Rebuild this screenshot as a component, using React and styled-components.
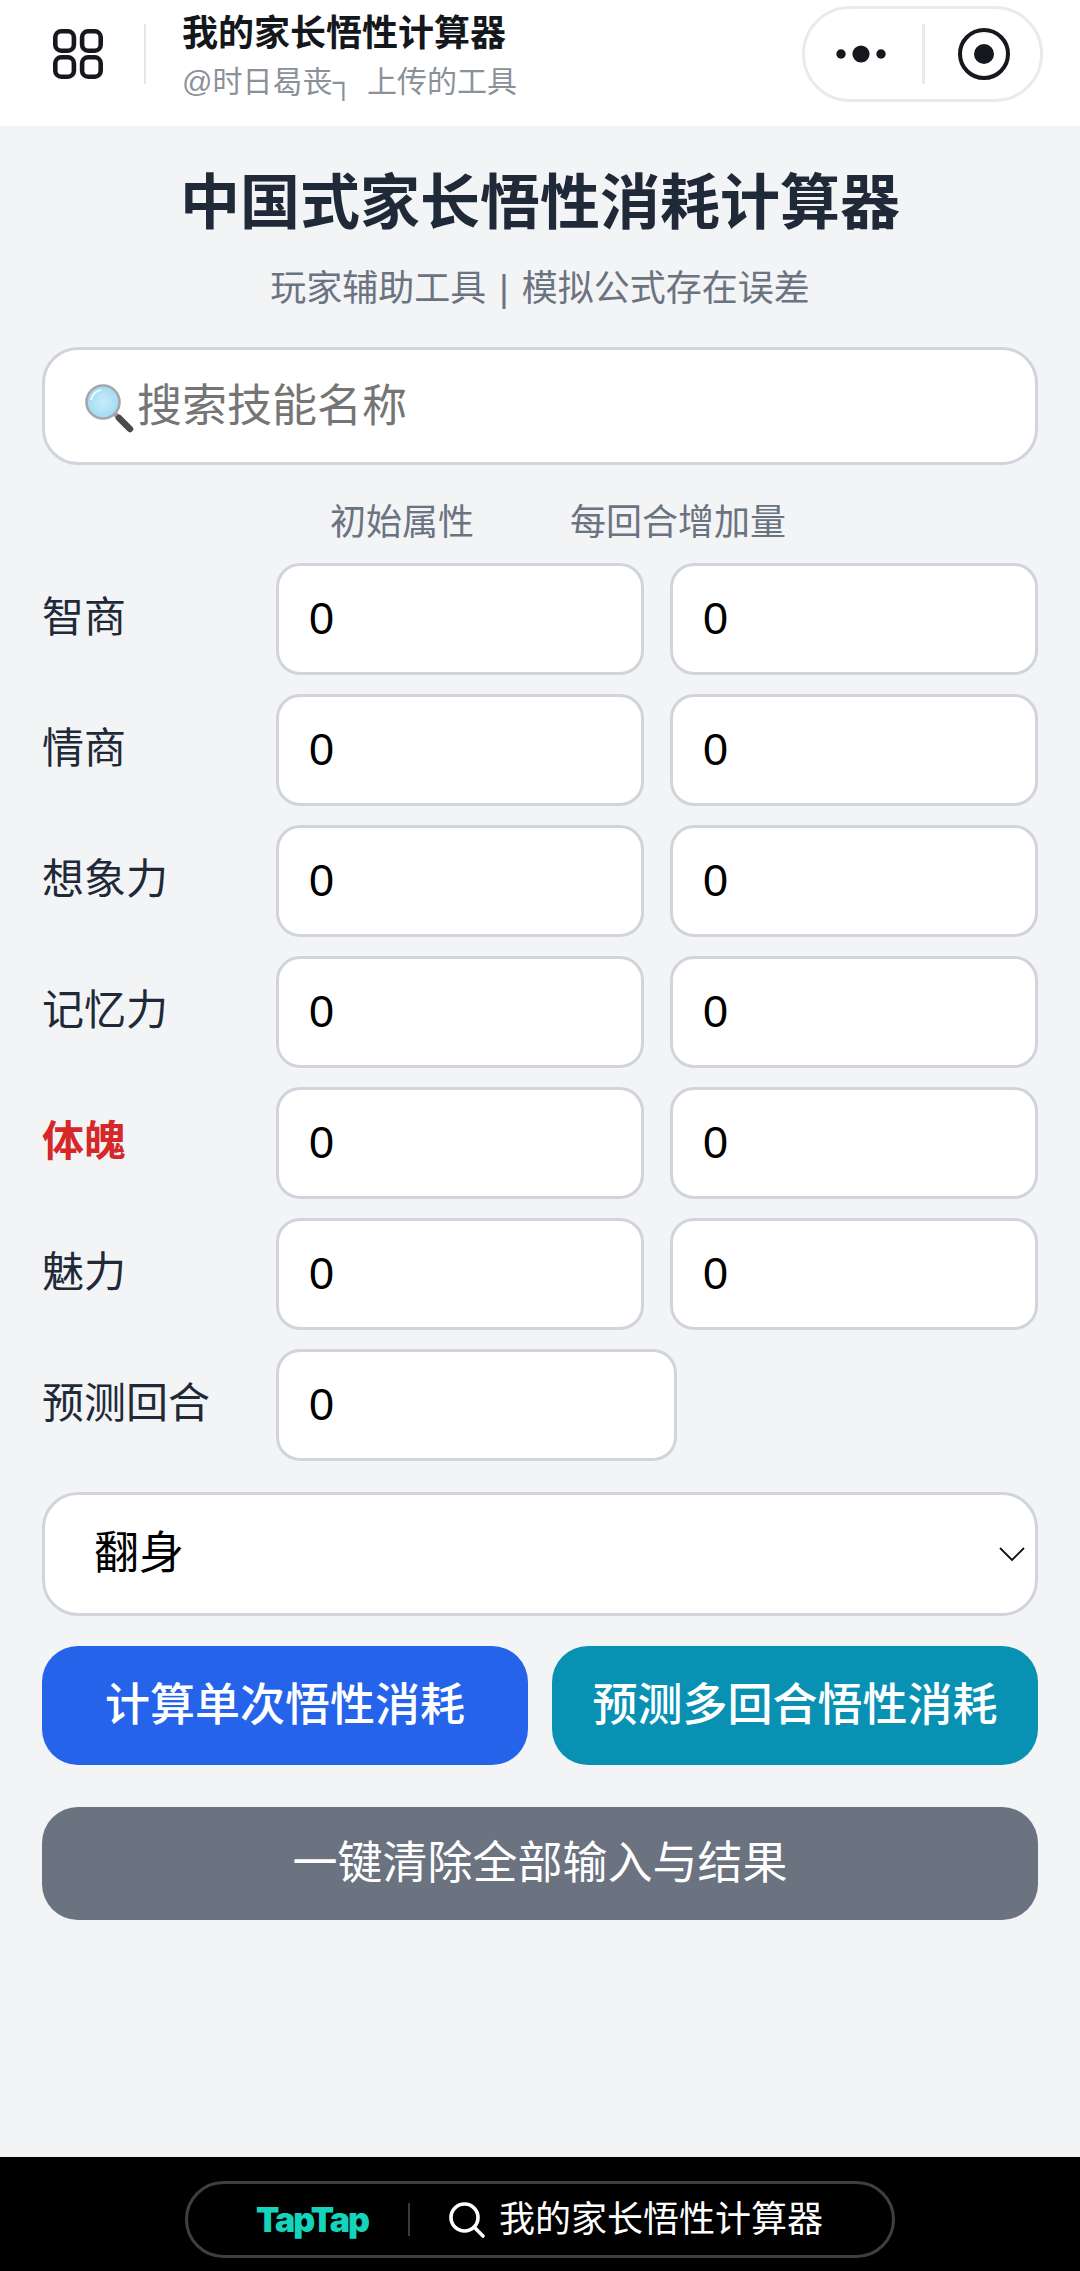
import React from "react";
import styled, { createGlobalStyle } from "styled-components";

const CJK = `"Liberation Sans", "Noto Sans CJK SC", sans-serif`;

const Global = createGlobalStyle`
  html, body { margin: 0; padding: 0; background: #f3f4f6; }
  * { box-sizing: border-box; }
  body { font-family: ${CJK}; }
`;

const Page = styled.div`
  width: 1080px;
  height: 2271px;
  display: flex;
  flex-direction: column;
  background: #f3f4f6;
  overflow: hidden;
`;

const TopBar = styled.header`
  height: 126px;
  flex: none;
  background: #fff;
  display: flex;
  align-items: flex-start;
  position: relative;
`;

const GridButton = styled.div`
  width: 144px;
  height: 108px;
  display: flex;
  align-items: center;
  justify-content: center;
  padding-left: 12px;
`;

const VLine = styled.div`
  width: 2px;
  height: 60px;
  margin-top: 24px;
  background: #e5e7eb;
  flex: none;
`;

const TitleBlock = styled.div`
  margin-left: 36px;
  padding-top: 9px;
  display: flex;
  flex-direction: column;
  gap: 2px;
`;

const AppName = styled.div`
  font-size: 36px;
  line-height: 50px;
  font-weight: 700;
  color: #14171c;
`;

const AppSub = styled.div`
  font-size: 30px;
  line-height: 42px;
  color: #8b9199;
  word-spacing: 5px;
`;

const Capsule = styled.div`
  position: absolute;
  left: 802px;
  top: 6px;
  width: 241px;
  height: 96px;
  border: 3px solid #e8eaed;
  border-radius: 48px;
  display: flex;
  align-items: flex-start;
`;

const CapsuleSlot = styled.div`
  width: ${(p) => p.$w}px;
  height: 90px;
  padding: 0 ${(p) => p.$right || 0}px 0 ${(p) => p.$left || 0}px;
  display: flex;
  align-items: center;
  justify-content: center;
`;

const CapsuleLine = styled.div`
  width: 3px;
  height: 60px;
  margin-top: 15px;
  background: #e8eaed;
  flex: none;
`;

const Main = styled.main`
  flex: 1;
  padding: 0 42px;
  display: flex;
  flex-direction: column;
`;

const Title = styled.h1`
  margin: 45px 0 0;
  font-size: 60px;
  line-height: 66px;
  font-weight: 700;
  color: #1f2937;
  text-align: center;
`;

const Subtitle = styled.p`
  margin: 26px 0 0;
  font-size: 36px;
  line-height: 52px;
  color: #6b7280;
  text-align: center;
  word-spacing: 3px;
`;

const SearchWrap = styled.div`
  position: relative;
  margin-top: 32px;
`;

const SearchIcon = styled.svg`
  position: absolute;
  left: 40px;
  top: 34px;
  width: 54px;
  height: 54px;
`;

const baseField = `
  border: 3px solid #d1d5db;
  background: #fff;
  outline: none;
  font-family: ${CJK};
  font-size: 45px;
  color: #000;
  display: block;
`;

const SearchInput = styled.input`
  ${baseField}
  width: 100%;
  height: 118px;
  border-radius: 36px;
  padding: 2px 0 0 92px;
  &::placeholder { color: #757575; opacity: 1; }
`;

const ColumnHead = styled.div`
  display: flex;
  gap: 96px;
  padding-left: 288px;
  margin-top: 36px;
  font-size: 36px;
  line-height: 44px;
  color: #6b7280;
`;

const Rows = styled.div`
  margin-top: 18px;
  display: flex;
  flex-direction: column;
  gap: 19px;
`;

const Row = styled.div`
  display: flex;
  align-items: center;
  gap: 26px;
`;

const Label = styled.label`
  width: 208px;
  flex: none;
  font-size: 42px;
  line-height: 56px;
  padding-bottom: 2px;
  color: ${(p) => (p.$alert ? "#d62828" : "#1f2937")};
  font-weight: ${(p) => (p.$alert ? 700 : 400)};
`;

const NumberField = styled.input`
  ${baseField}
  width: ${(p) => p.$w || 368}px;
  height: 112px;
  border-radius: 24px;
  padding: 0 0 0 30px;
`;

const SelectWrap = styled.div`
  position: relative;
  margin-top: 31px;
`;

const SkillSelect = styled.select`
  ${baseField}
  width: 100%;
  height: 124px;
  border-radius: 36px;
  padding: 0 0 2px 49px;
  appearance: none;
  -webkit-appearance: none;
`;

const Chevron = styled.svg`
  position: absolute;
  right: 13px;
  top: 54px;
  width: 26px;
  height: 16px;
`;

const ButtonRow = styled.div`
  display: flex;
  gap: 24px;
  margin-top: 30px;
`;

const Action = styled.button`
  flex: 1;
  height: ${(p) => p.$h}px;
  border: 0;
  border-radius: 36px;
  background: ${(p) => p.$bg};
  color: #fff;
  font-family: ${CJK};
  font-size: 45px;
  font-weight: ${(p) => p.$weight || 500};
  padding: 0 0 8px;
  display: block;
  width: 100%;
`;

const ClearWrap = styled.div`
  margin-top: 42px;
`;

const Footer = styled.footer`
  height: 114px;
  flex: none;
  background: #000;
  padding: 24px 0 0 185px;
`;

const FooterPill = styled.div`
  width: 710px;
  height: 77px;
  border: 3px solid #3f3f3f;
  border-radius: 39px;
  display: flex;
  align-items: center;
  padding-left: 68px;
`;

const TapLogo = styled.span`
  width: 114px;
  flex: none;
  font-family: Inter, sans-serif;
  font-weight: 900;
  font-size: 34px;
  letter-spacing: -1.9px;
  line-height: 36px;
  color: #14d4bb;
  white-space: nowrap;
`;

const FooterLine = styled.div`
  width: 2px;
  height: 33px;
  margin-left: 38px;
  background: #3a3a3a;
  flex: none;
`;

const FooterSearch = styled.svg`
  width: 38px;
  height: 38px;
  margin-left: 38px;
  flex: none;
`;

const FooterText = styled.span`
  margin-left: 13px;
  font-size: 36px;
  line-height: 50px;
  color: #fff;
  white-space: nowrap;
`;

const stats = [
  { name: "智商" },
  { name: "情商" },
  { name: "想象力" },
  { name: "记忆力" },
  { name: "体魄", alert: true },
  { name: "魅力" },
];

export default function App() {
  return (
    <Page>
      <Global />
      <TopBar>
        <GridButton>
          <svg width="50" height="50" viewBox="0 0 50 50" fill="none" stroke="#16181d" strokeWidth="4.6">
            <rect x="2.3" y="2.3" width="18.6" height="19.4" rx="6" />
            <rect x="29.1" y="2.3" width="18.6" height="19.4" rx="6" />
            <rect x="2.3" y="28.3" width="18.6" height="19.4" rx="6" />
            <rect x="29.1" y="28.3" width="18.6" height="19.4" rx="6" />
          </svg>
        </GridButton>
        <VLine />
        <TitleBlock>
          <AppName>我的家长悟性计算器</AppName>
          <AppSub>@时日曷丧┐ 上传的工具</AppSub>
        </TitleBlock>
        <Capsule>
          <CapsuleSlot $w={117} $right={5}>
            <svg width="52" height="20" viewBox="0 0 52 20" fill="#16181d">
              <circle cx="6" cy="10" r="4.7" />
              <circle cx="26" cy="10" r="8.6" />
              <circle cx="46" cy="10" r="4.7" />
            </svg>
          </CapsuleSlot>
          <CapsuleLine />
          <CapsuleSlot $w={115} $left={3}>
            <svg width="52" height="52" viewBox="0 0 52 52">
              <circle cx="26" cy="26" r="24" fill="none" stroke="#16181d" strokeWidth="4" />
              <circle cx="26" cy="26" r="10" fill="#16181d" />
            </svg>
          </CapsuleSlot>
        </Capsule>
      </TopBar>
      <Main>
        <Title>中国式家长悟性消耗计算器</Title>
        <Subtitle>玩家辅助工具 | 模拟公式存在误差</Subtitle>
        <SearchWrap>
          <SearchInput placeholder="搜索技能名称" readOnly />
          <SearchIcon viewBox="0 0 54 54">
            <defs>
              <radialGradient id="lens" cx="50%" cy="50%" r="55%">
                <stop offset="0%" stopColor="#c8ecfb" />
                <stop offset="100%" stopColor="#9fd8f3" />
              </radialGradient>
            </defs>
            <line x1="32" y1="32" x2="38" y2="38" stroke="#9a9a9a" strokeWidth="5" />
            <line x1="37" y1="37" x2="48" y2="48" stroke="#4a4a4a" strokeWidth="6.5" strokeLinecap="round" />
            <circle cx="21" cy="21" r="16.5" fill="url(#lens)" stroke="#a4a8ab" strokeWidth="2.6" />
            <path d="M9 19 A12.5 12.5 0 0 1 19 9" fill="none" stroke="#eefaff" strokeWidth="2" />
          </SearchIcon>
        </SearchWrap>
        <ColumnHead>
          <span>初始属性</span>
          <span>每回合增加量</span>
        </ColumnHead>
        <Rows>
          {stats.map((s) => (
            <Row key={s.name}>
              <Label $alert={s.alert}>{s.name}</Label>
              <NumberField value="0" readOnly />
              <NumberField value="0" readOnly />
            </Row>
          ))}
          <Row>
            <Label>预测回合</Label>
            <NumberField $w={401} value="0" readOnly />
          </Row>
        </Rows>
        <SelectWrap>
          <SkillSelect defaultValue="翻身">
            <option>翻身</option>
          </SkillSelect>
          <Chevron viewBox="0 0 26 16" fill="none" stroke="#111" strokeWidth="1.8">
            <path d="M1 2 L13 14 L25 2" />
          </Chevron>
        </SelectWrap>
        <ButtonRow>
          <Action $bg="#2563eb" $h={119}>计算单次悟性消耗</Action>
          <Action $bg="#0891b2" $h={119}>预测多回合悟性消耗</Action>
        </ButtonRow>
        <ClearWrap>
          <Action $bg="#6b7280" $h={113} $weight={400}>一键清除全部输入与结果</Action>
        </ClearWrap>
      </Main>
      <Footer>
        <FooterPill>
          <TapLogo>TapTap</TapLogo>
          <FooterLine />
          <FooterSearch viewBox="0 0 38 38" fill="none" stroke="#fff" strokeWidth="3.6" strokeLinecap="round">
            <circle cx="16.5" cy="16.5" r="13.5" />
            <line x1="26.5" y1="26.5" x2="35" y2="35" />
          </FooterSearch>
          <FooterText>我的家长悟性计算器</FooterText>
        </FooterPill>
      </Footer>
    </Page>
  );
}
